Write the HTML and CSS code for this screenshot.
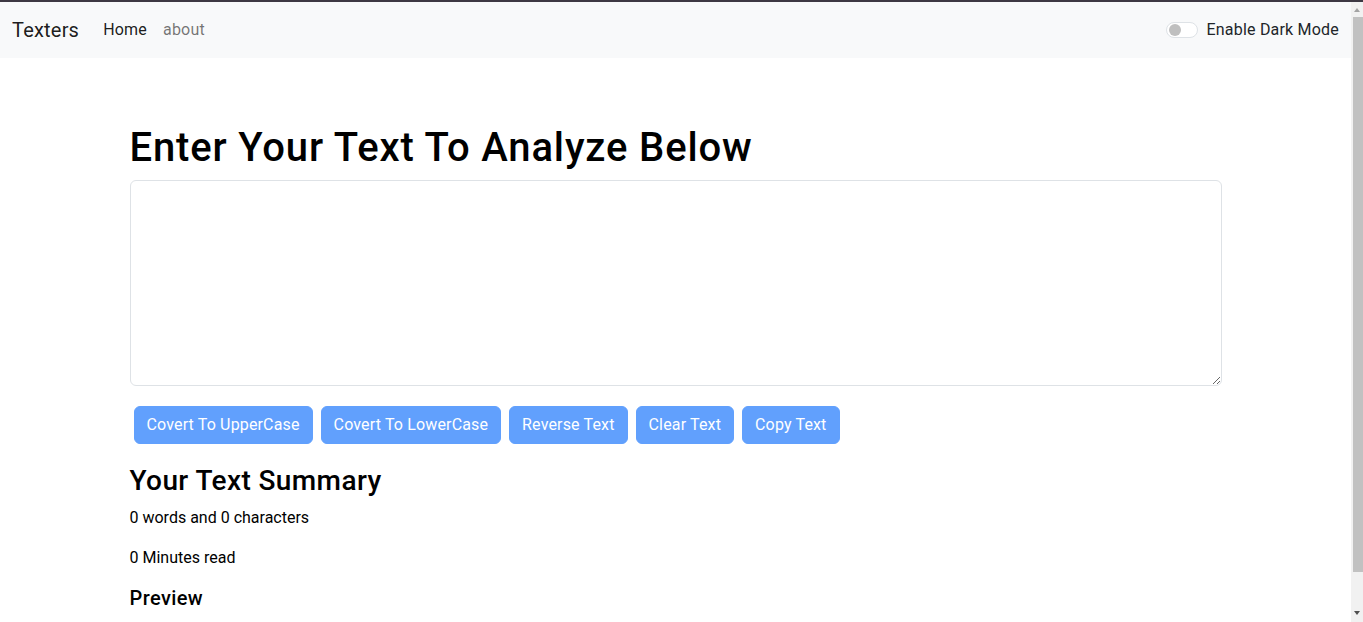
FILE: index.html
```html
<!DOCTYPE html>
<html lang="en">
<head>
<meta charset="utf-8">
<title>Texters</title>
<link rel="stylesheet" href="styles.css">
</head>
<body>
<nav class="navbar">
  <div class="nav-left">
    <a class="brand" href="#">Texters</a>
    <ul class="nav-links">
      <li><a class="nav-link active" href="#">Home</a></li>
      <li><a class="nav-link" href="#">about</a></li>
    </ul>
  </div>
  <div class="switch-wrap">
    <span class="switch"><span class="knob"></span></span>
    <label class="switch-label">Enable Dark Mode</label>
  </div>
</nav>

<main class="container first">
  <h1 class="title">Enter Your Text To Analyze Below</h1>
  <textarea class="textbox" rows="8"></textarea>
  <div class="btn-row">
    <button class="btn" disabled>Covert To UpperCase</button>
    <button class="btn" disabled>Covert To LowerCase</button>
    <button class="btn" disabled>Reverse Text</button>
    <button class="btn" disabled>Clear Text</button>
    <button class="btn" disabled>Copy Text</button>
  </div>
</main>

<section class="container summary">
  <h2 class="sum-title">Your Text Summary</h2>
  <p class="line">0 words and 0 characters</p>
  <p class="line">0 Minutes read</p>
  <h3 class="preview-title">Preview</h3>
  <p class="line">Nothing to preview!</p>
</section>

<div class="scrollbar" aria-hidden="true">
  <span class="arrow up"></span>
  <span class="thumb"></span>
  <span class="arrow down"></span>
</div>
</body>
</html>
```

FILE: styles.css
```css
* { box-sizing: border-box; }

html {
  margin: 0;
  padding: 0;
  border-top: 2px solid #3d3843;
}

body {
  margin: 0 12px 0 0;
  padding: 0;
  font-family: "Roboto", "Liberation Sans", sans-serif;
  font-size: 16px;
  line-height: 24px;
  letter-spacing: 0.2px;
  color: #212529;
  background: #fff;
}

.navbar {
  background: #f8f9fa;
  height: 56px;
  padding: 0 12px;
  display: flex;
  align-items: center;
  justify-content: space-between;
}

.nav-left { display: flex; align-items: center; }

.brand {
  font-size: 20px;
  line-height: 30px;
  padding: 5px 0;
  margin-right: 16px;
  color: rgba(0, 0, 0, 0.9);
  text-decoration: none;
}

.nav-links {
  list-style: none;
  margin: 0;
  padding: 0;
  display: flex;
}

.nav-link {
  display: block;
  padding: 8px;
  color: rgba(0, 0, 0, 0.55);
  text-decoration: none;
}

.nav-link.active { color: rgba(0, 0, 0, 0.9); }

.switch-wrap { display: flex; align-items: center; gap: 9px; }

.switch {
  width: 32px;
  height: 16px;
  border: 1px solid #dee2e6;
  border-radius: 8px;
  background: #fff;
  display: flex;
  align-items: center;
  padding-left: 2px;
}

.knob {
  width: 12px;
  height: 12px;
  border-radius: 50%;
  background: #bfbfbf;
}

.switch-label { color: #212529; }

.container {
  max-width: 1140px;
  margin: 0 auto;
  padding: 0 24px;
}

.first { padding-top: 66px; }

.title {
  font-size: 40px;
  line-height: 48px;
  font-weight: 500;
  letter-spacing: 0.85px;
  margin: 0 0 8px;
  color: #000;
}

.textbox {
  display: block;
  width: 100%;
  height: 206px;
  border: 1px solid #dee2e6;
  border-radius: 6px;
  padding: 6px 12px;
  font: inherit;
  margin: 0 0 16px;
  resize: vertical;
}

.btn-row { display: flex; flex-wrap: wrap; }

.btn {
  margin: 4px;
  padding: 6px 12px;
  font-family: inherit;
  font-size: 16px;
  line-height: 24px;
  letter-spacing: 0.15px;
  color: #fff;
  background: #0d6efd;
  border: 1px solid #0d6efd;
  border-radius: 6px;
  opacity: 0.65;
}

.summary { margin-top: 16px; padding-bottom: 16px; }

.sum-title {
  font-size: 28px;
  line-height: 33.6px;
  font-weight: 500;
  letter-spacing: 0.4px;
  margin: 0 0 8px;
  color: #000;
}

.line { margin: 0 0 16px; color: #000; letter-spacing: 0; }

.preview-title {
  font-size: 20px;
  line-height: 24px;
  font-weight: 500;
  letter-spacing: 0.4px;
  margin: 0 0 8px;
  color: #000;
}

/* simulated browser scrollbar overlay */
.scrollbar {
  position: fixed;
  top: 2px;
  right: 0;
  width: 12px;
  bottom: 0;
  background: #f1f1f1;
}

.thumb {
  position: absolute;
  top: 15px;
  left: 2px;
  right: 0;
  height: 555px;
  background: #c1c1c1;
}

.arrow {
  position: absolute;
  left: 3px;
  width: 0;
  height: 0;
  border-left: 3.5px solid transparent;
  border-right: 3.5px solid transparent;
}

.arrow.up {
  top: 6px;
  border-bottom: 4px solid #a3a3a3;
}

.arrow.down {
  bottom: 7px;
  border-top: 4px solid #505050;
}
```
